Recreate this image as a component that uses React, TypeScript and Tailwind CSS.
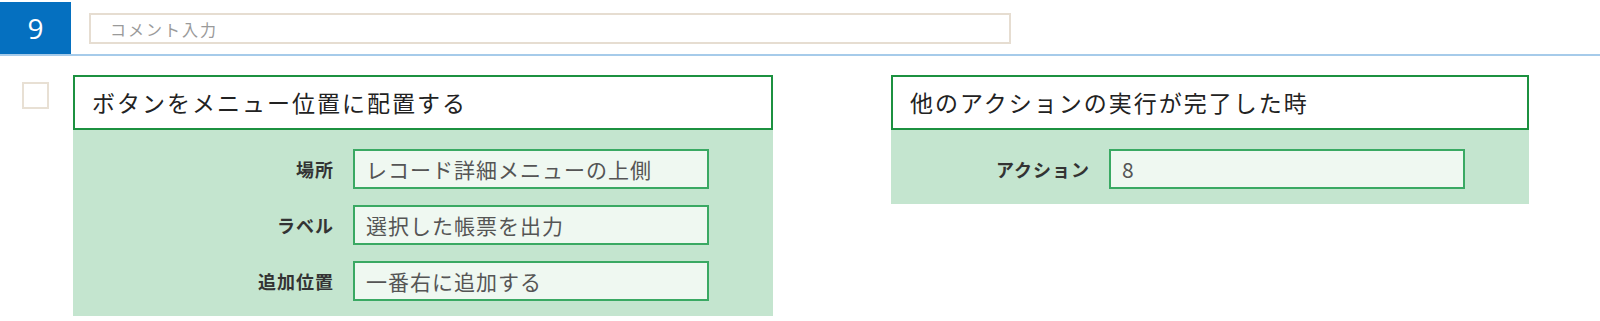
import React from 'react';

interface Field {
  label: string;
  value: string;
}

interface CardProps {
  title: string;
  fields: Field[];
  width: string;
}

const Card: React.FC<CardProps> = ({ title, fields, width }) => {
  return (
    <div className={`${width} flex flex-col`}>
      {/* Title box */}
      <div className="h-[55px] border-2 border-[#1c9140] bg-white flex items-center pl-[17px]">
        <span className="text-[23px] leading-none tracking-[2px] text-[#222]">{title}</span>
      </div>

      {/* Body */}
      <div className="bg-[#c4e5cf] pt-[19px] pb-[15px] pr-[64px] flex flex-col gap-[16px]">
        {fields.map((f) => (
          <div key={f.label} className="flex items-center">
            <div className="flex-1 text-right pr-[19px] text-[18px] leading-none font-bold tracking-[1px] text-[#333]">
              {f.label}
            </div>
            <div className="w-[356px] h-[40px] border-2 border-[#3aa963] bg-[#eff8f1] flex items-center pl-[11px]">
              <span className="text-[21px] leading-none tracking-[1px] text-[#555]">{f.value}</span>
            </div>
          </div>
        ))}
      </div>
    </div>
  );
};

export default function App() {
  return (
    <div className="w-[1600px] h-[321px] bg-white pt-[2px] font-['Noto_Sans_CJK_JP','Noto_Sans',sans-serif]">
      {/* Header row */}
      <div className="flex items-start h-[54px] border-b-2 border-[#a6cbea]">
        <div className="w-[71px] h-full bg-[#0570c0] flex items-center justify-center">
          <span className="font-['Open_Sans',sans-serif] text-[28px] leading-none text-white">9</span>
        </div>
        <div className="ml-[18px] mt-[11px] w-[922px] h-[31px] border-2 border-[#e6ddd1] flex items-center pl-[19px]">
          <span className="text-[16px] leading-none tracking-[2px] text-[#9a9a9a]">コメント入力</span>
        </div>
      </div>

      {/* Content row */}
      <div className="flex items-start pt-[19px]">
        <div className="ml-[22px] mt-[7px] w-[27px] h-[27px] border-2 border-[#e8e0d4] bg-white" />
        <div className="ml-[24px]">
          <Card
            title="ボタンをメニュー位置に配置する"
            width="w-[700px]"
            fields={[
              { label: '場所', value: 'レコード詳細メニューの上側' },
              { label: 'ラベル', value: '選択した帳票を出力' },
              { label: '追加位置', value: '一番右に追加する' },
            ]}
          />
        </div>
        <div className="ml-[118px]">
          <Card
            title="他のアクションの実行が完了した時"
            width="w-[638px]"
            fields={[{ label: 'アクション', value: '8' }]}
          />
        </div>
      </div>
    </div>
  );
}
